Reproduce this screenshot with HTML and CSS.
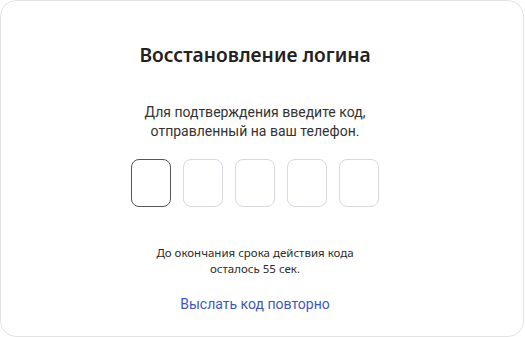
FILE: index.html
```html
<!DOCTYPE html>
<html lang="ru">
<head>
<meta charset="utf-8">
<title>Восстановление логина</title>
<link rel="stylesheet" href="styles.css">
</head>
<body>
<main class="card">
  <h1 class="title">Восстановление логина</h1>
  <p class="lead">Для подтверждения введите код,<br>отправленный на ваш телефон.</p>
  <div class="code">
    <input class="cell cell-active" type="text" maxlength="1" aria-label="Цифра 1">
    <input class="cell" type="text" maxlength="1" aria-label="Цифра 2">
    <input class="cell" type="text" maxlength="1" aria-label="Цифра 3">
    <input class="cell" type="text" maxlength="1" aria-label="Цифра 4">
    <input class="cell" type="text" maxlength="1" aria-label="Цифра 5">
  </div>
  <p class="timer">До окончания срока действия кода<br>осталось 55 сек.</p>
  <a class="resend" href="#">Выслать код повторно</a>
</main>
</body>
</html>
```
FILE: styles.css
```css
* { box-sizing: border-box; }
html, body { margin: 0; padding: 0; background: #ffffff; }
body {
  font-family: "Noto Sans", "Open Sans", sans-serif;
  color: #2b2b2b;
}
.card {
  width: 524px;
  height: 337px;
  border: 1px solid #e3e3e3;
  border-radius: 16px;
  padding: 0 14px 0 0;
  display: flex;
  flex-direction: column;
  align-items: center;
  text-align: center;
}
.title {
  margin: 40px 0 0;
  font-size: 19.2px;
  line-height: 28px;
  font-weight: 600;
  color: #222;
}
.lead {
  margin: 34px 0 0;
  font-family: Roboto, "Noto Sans", sans-serif;
  font-size: 14px;
  line-height: 19px;
  color: #333;
}
.code {
  display: flex;
  gap: 12px;
  margin-top: 18px;
}
.cell {
  width: 40px;
  height: 48px;
  border: 1px solid #d6d9de;
  border-radius: 8px;
  background: #fff;
  padding: 0;
  outline: none;
}
.cell-active { border-color: #55575c; }
.timer {
  margin: 38px 0 0;
  font-size: 11.5px;
  line-height: 16px;
  color: #2b2b2b;
}
.resend {
  margin-top: 17px;
  font-family: Roboto, "Noto Sans", sans-serif;
  font-size: 14px;
  line-height: 20px;
  color: #3e56c4;
  text-decoration: none;
}
```
